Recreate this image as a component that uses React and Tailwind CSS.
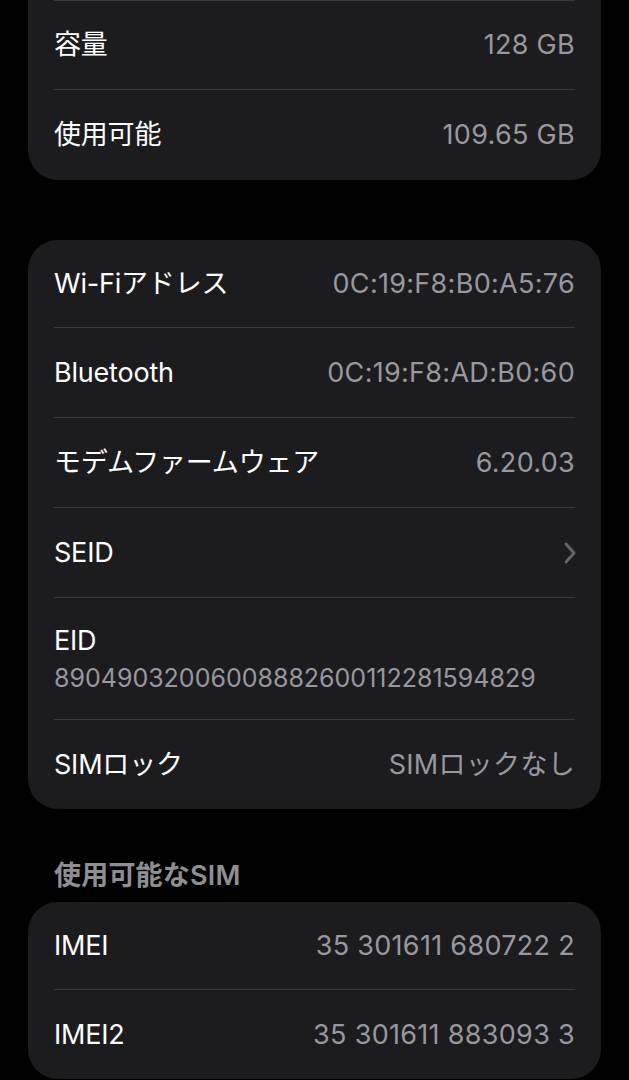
const font = { fontFamily: 'Inter, "Noto Sans CJK JP", sans-serif' };

function Chevron() {
  return (
    <svg width="14" height="22" viewBox="0 0 14 22" className="-mr-[2px]">
      <polyline
        points="3,2 11,11 3,20"
        fill="none"
        stroke="#66666b"
        strokeWidth="2.8"
        strokeLinecap="round"
        strokeLinejoin="round"
      />
    </svg>
  );
}

function Row({ label, value, first, chevron }) {
  return (
    <div
      className={
        'flex items-center justify-between ' +
        (first ? 'h-[87px]' : 'h-[90px] border-t border-[#3a3a3c]')
      }
    >
      <span className="text-[27px] leading-8 text-white tracking-[-0.2px]">{label}</span>
      {chevron ? (
        <Chevron />
      ) : (
        <span className="text-[27px] leading-8 text-[#98989e] tracking-[0.3px]">{value}</span>
      )}
    </div>
  );
}

export default function App() {
  return (
    <div className="min-h-[1080px] bg-black overflow-hidden" style={font}>
      {/* storage card, top cut off */}
      <div className="mx-[28px] bg-[#1c1c1e] rounded-b-[30px] px-[26px]">
        <div className="h-[89px] flex items-center justify-between border-t border-[#3a3a3c]">
          <span className="text-[27px] leading-8 text-white tracking-[-0.2px]">容量</span>
          <span className="text-[27px] leading-8 text-[#98989e] tracking-[0.3px]">128 GB</span>
        </div>
        <div className="h-[91px] flex items-center justify-between border-t border-[#3a3a3c]">
          <span className="text-[27px] leading-8 text-white tracking-[-0.2px]">使用可能</span>
          <span className="text-[27px] leading-8 text-[#98989e] tracking-[0.3px]">109.65 GB</span>
        </div>
      </div>

      {/* network card */}
      <div className="mx-[28px] mt-[60px] bg-[#1c1c1e] rounded-[30px] px-[26px]">
        <Row first label="Wi-Fiアドレス" value="0C:19:F8:B0:A5:76" />
        <Row label="Bluetooth" value="0C:19:F8:AD:B0:60" />
        <Row label="モデムファームウェア" value="6.20.03" />
        <Row label="SEID" chevron />
        <div className="h-[122px] flex flex-col justify-center gap-[6px] border-t border-[#3a3a3c]">
          <span className="text-[27px] leading-8 text-white tracking-[-0.2px]">EID</span>
          <span className="text-[25px] leading-[30px] text-[#98989e] tracking-[0px]">
            89049032006008882600112281594829
          </span>
        </div>
        <Row label="SIMロック" value="SIMロックなし" />
      </div>

      <div className="mt-[51px] mb-[10px] px-[54px] h-8 flex items-center">
        <span className="text-[27px] leading-8 font-semibold text-[#8e8e93] tracking-[0.2px]">
          使用可能なSIM
        </span>
      </div>

      {/* SIM card */}
      <div className="mx-[28px] bg-[#1c1c1e] rounded-[30px] px-[26px]">
        <Row first label="IMEI" value="35 301611 680722 2" />
        <Row label="IMEI2" value="35 301611 883093 3" />
      </div>
    </div>
  );
}
